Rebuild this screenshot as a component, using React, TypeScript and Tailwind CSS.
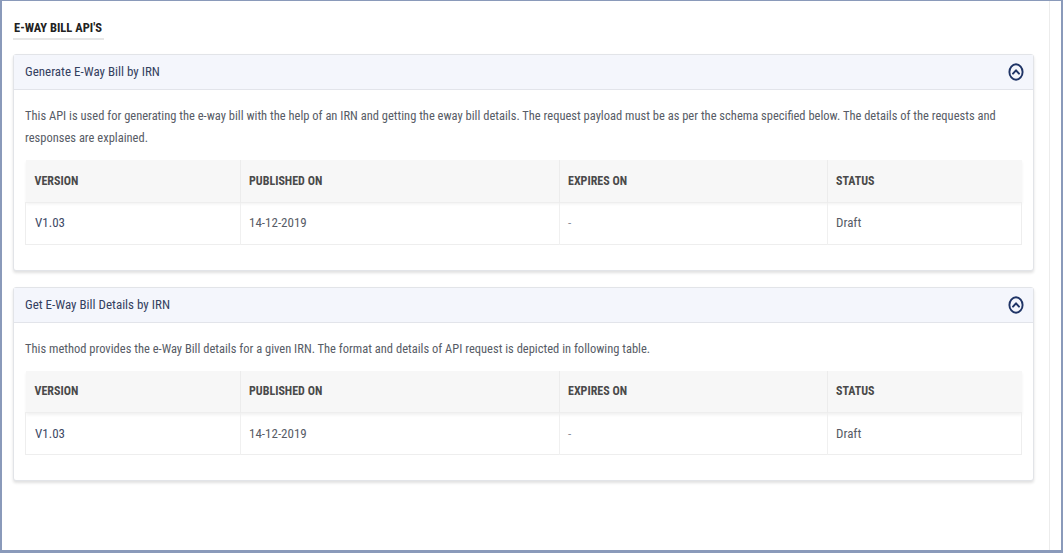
import { ReactNode } from "react";

type Api = {
  title: string;
  description: ReactNode;
  version: string;
  published: string;
  expires: string;
  status: string;
};

const APIS: Api[] = [
  {
    title: "Generate E-Way Bill by IRN",
    description:
      "This API is used for generating the e-way bill with the help of an IRN and getting the eway bill details. The request payload must be as per the schema specified below. The details of the requests and responses are explained.",
    version: "V1.03",
    published: "14-12-2019",
    expires: "-",
    status: "Draft",
  },
  {
    title: "Get E-Way Bill Details by IRN",
    description:
      "This method provides the e-Way Bill details for a given IRN. The format and details of API request is depicted in following table.",
    version: "V1.03",
    published: "14-12-2019",
    expires: "-",
    status: "Draft",
  },
];

function ChevronCircle() {
  return (
    <svg width="16" height="18" viewBox="0 0 16 18" fill="none">
      <ellipse cx="8" cy="9" rx="6.6" ry="7.7" stroke="#1f3466" strokeWidth="1.9" />
      <path d="M5 10.6 L8 7.3 L11 10.6" stroke="#1f3466" strokeWidth="2" strokeLinecap="round" strokeLinejoin="round" />
    </svg>
  );
}

function ApiCard({ api }: { api: Api }) {
  return (
    <div className="rounded-[3px] border border-[#e2e4e8] bg-white shadow-[0_2px_3px_rgba(0,0,0,0.12)]">
      {/* header */}
      <div className="flex h-[35px] items-center justify-between border-b border-[#e2e4ea] bg-[#f4f6fc] pl-[11px] pr-[9px]">
        <span className="text-[13px] text-[#34415f]">{api.title}</span>
        <ChevronCircle />
      </div>

      <div className="px-[11px] pb-[25px] pt-[15px]">
        <p className="text-[12.5px] leading-[22px] text-[#575c66]">{api.description}</p>

        <table className="mt-[11px] w-full border-collapse text-[12px]">
          <thead>
            <tr className="h-[42px] bg-[#f7f7f7] shadow-[0_2px_3px_rgba(0,0,0,0.06)]">
              <th className="w-[215px] border-r border-[#ececec] pl-[9px] text-left font-bold text-[#4a4a4a]">VERSION</th>
              <th className="w-[319px] border-r border-[#ececec] pl-[8px] text-left font-bold text-[#4a4a4a]">PUBLISHED ON</th>
              <th className="w-[268px] border-r border-[#ececec] pl-[8px] text-left font-bold text-[#4a4a4a]">EXPIRES ON</th>
              <th className="pl-[8px] text-left font-bold text-[#4a4a4a]">STATUS</th>
            </tr>
          </thead>
          <tbody>
            <tr className="h-[42px] border border-[#eeeeee]">
              <td className="border-r border-[#f0f0f0] pl-[9px] text-[13px] text-[#3d4a66]">{api.version}</td>
              <td className="border-r border-[#f0f0f0] pl-[8px] text-[13px] text-[#575c66]">{api.published}</td>
              <td className="border-r border-[#f0f0f0] pl-[8px] text-[13px] text-[#8a8f99]">{api.expires}</td>
              <td className="pl-[8px] text-[13px] text-[#575c66]">{api.status}</td>
            </tr>
          </tbody>
        </table>
      </div>
    </div>
  );
}

export default function App() {
  return (
    <div
      className="flex h-[553px] w-[1063px] border-b-[3px] border-l-2 border-r-2 border-t border-[#8a9aba] bg-white"
      style={{ fontFamily: '"Liberation Sans Narrow", "Roboto Condensed", "DejaVu Sans Condensed", Roboto, sans-serif' }}
    >
      <div className="flex-1 pl-[11px] pr-[15px] pt-[14px]">
        <div className="inline-block border-b-2 border-[#e6e6e6] pb-[3px] pl-[1px] pr-[2px]">
          <h1 className="text-[12.5px] font-bold leading-[14px] text-[#222]">E-WAY BILL API'S</h1>
        </div>

        <div className="mt-[14px] flex flex-col gap-[16px]">
          {APIS.map((api) => (
            <ApiCard key={api.title} api={api} />
          ))}
        </div>
      </div>
      <div className="w-[12px] border-l border-[#ececec]" />
    </div>
  );
}
